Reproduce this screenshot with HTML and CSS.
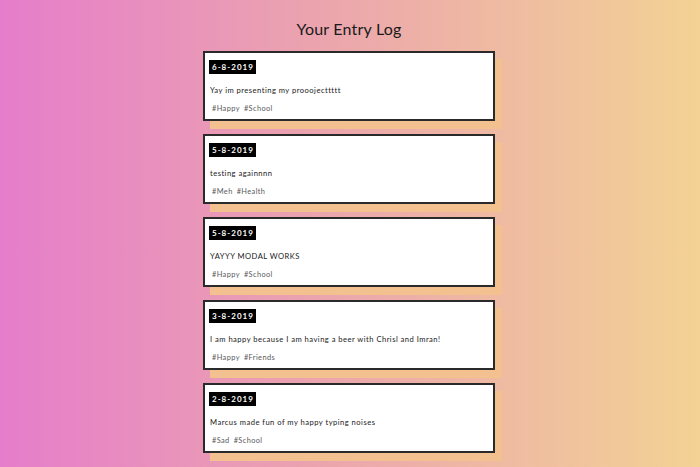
FILE: index.html
```html
<!DOCTYPE html>
<html>
<head>
<meta charset="utf-8">
<link rel="stylesheet" href="styles.css">
</head>
<body>
<main class="page">
  <h1 class="title">Your Entry Log</h1>
  <section class="log">
    <article class="entry">
      <span class="date">6-8-2019</span>
      <p class="text">Yay im presenting my prooojecttttt</p>
      <div class="tags"><span>#Happy</span><span>#School</span></div>
    </article>
    <article class="entry">
      <span class="date">5-8-2019</span>
      <p class="text">testing againnnn</p>
      <div class="tags"><span>#Meh</span><span>#Health</span></div>
    </article>
    <article class="entry">
      <span class="date">5-8-2019</span>
      <p class="text">YAYYY MODAL WORKS</p>
      <div class="tags"><span>#Happy</span><span>#School</span></div>
    </article>
    <article class="entry">
      <span class="date">3-8-2019</span>
      <p class="text">I am happy because I am having a beer with Chrisl and Imran!</p>
      <div class="tags"><span>#Happy</span><span>#Friends</span></div>
    </article>
    <article class="entry">
      <span class="date">2-8-2019</span>
      <p class="text">Marcus made fun of my happy typing noises</p>
      <div class="tags"><span>#Sad</span><span>#School</span></div>
    </article>
  </section>
</main>
</body>
</html>
```
FILE: styles.css
```css
html, body {
  margin: 0;
  padding: 0;
}
body {
  min-height: 100vh;
  background: linear-gradient(to right, #e67dcb 0%, #eba4ae 45%, #f3d294 100%);
  font-family: Lato, "Noto Sans", sans-serif;
  color: #1a1a1a;
}
.page {
  display: flex;
  flex-direction: column;
  align-items: center;
  padding-top: 19px;
  padding-right: 2px;
}
.title {
  margin: 0 0 12px;
  font-size: 16px;
  line-height: 20px;
  font-weight: 400;
  letter-spacing: 0.2px;
}
.log {
  display: flex;
  flex-direction: column;
  gap: 13px;
}
.entry {
  box-sizing: border-box;
  width: 292px;
  height: 70px;
  background: #fff;
  border: 2px solid #2a2a2a;
  box-shadow: 7px 8px 0 #f3c08f;
  padding: 7px 4px 0;
  display: flex;
  flex-direction: column;
  align-items: flex-start;
}
.date {
  background: #000;
  color: #fff;
  font-size: 8px;
  font-weight: 700;
  letter-spacing: 1px;
  line-height: 14px;
  height: 14px;
  padding: 0 2px 0 3px;
}
.text {
  margin: 11px 0 0 1px;
  font-size: 7.6px;
  line-height: 10px;
  letter-spacing: 0.47px;
}
.tags {
  margin: 9px 0 0 3px;
  display: flex;
  gap: 4px;
  font-size: 7.4px;
  line-height: 10px;
  letter-spacing: 0.4px;
  color: #5a5a5a;
  font-weight: 400;
}
```
